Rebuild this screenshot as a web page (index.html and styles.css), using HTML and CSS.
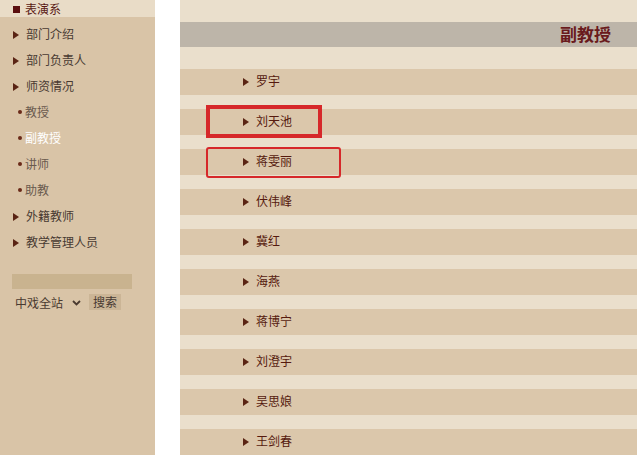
FILE: index.html
```html
<!DOCTYPE html>
<html>
<head>
  <meta charset="utf-8">
  <link rel="stylesheet" href="styles.css">
</head>
<body>
  <div class="sidebar">
    <div class="dept"><span class="square"></span>表演系</div>
    <ul class="menu">
      <li class="item"><span class="arrow"></span>部门介绍</li>
      <li class="item"><span class="arrow"></span>部门负责人</li>
      <li class="item"><span class="arrow"></span>师资情况</li>
      <li class="sub"><span class="dot"></span>教授</li>
      <li class="sub active"><span class="dot"></span>副教授</li>
      <li class="sub"><span class="dot"></span>讲师</li>
      <li class="sub"><span class="dot"></span>助教</li>
      <li class="item"><span class="arrow"></span>外籍教师</li>
      <li class="item"><span class="arrow"></span>教学管理人员</li>
    </ul>

    <div class="search">
      <div class="search-input"></div>
      <div class="search-row">
        <span class="scope">中戏全站</span>
        <svg class="chevron" width="9" height="6" viewBox="0 0 9 6"><path d="M1 1 L4.5 4.5 L8 1" fill="none" stroke="#4a3a30" stroke-width="1.8"/></svg>
        <span class="search-btn">搜索</span>
      </div>
    </div>
  </div>

  <div class="main">
    <div class="band-top"></div>
    <div class="title-bar">副教授</div>
    <div class="band-top"></div>

    <ul class="people">
      <li class="person"><span class="arrow"></span>罗宇</li>
      <li class="person"><span class="arrow"></span>刘天池</li>
      <li class="person"><span class="arrow"></span>蒋雯丽</li>
      <li class="person"><span class="arrow"></span>伏伟峰</li>
      <li class="person"><span class="arrow"></span>冀红</li>
      <li class="person"><span class="arrow"></span>海燕</li>
      <li class="person"><span class="arrow"></span>蒋博宁</li>
      <li class="person"><span class="arrow"></span>刘澄宇</li>
      <li class="person"><span class="arrow"></span>吴思娘</li>
      <li class="person"><span class="arrow"></span>王剑春</li>
    </ul>

    <!-- annotation boxes drawn over the list -->
    <div class="mark mark-thick"></div>
    <div class="mark mark-thin"></div>
  </div>
</body>
</html>
```

FILE: styles.css
```css
body {
  margin: 0;
  display: flex;
  height: 455px;
  overflow: hidden;
  background: #ffffff;
  font-family: "Noto Sans CJK SC", "Noto Sans", sans-serif;
  font-size: 12px;
}

ul {
  list-style: none;
  margin: 0;
  padding: 0;
}

.sidebar {
  width: 155px;
  background: #d9c4a7;
  color: #483a32;
}

.dept {
  height: 17px;
  line-height: 17px;
  background: #e9dcc7;
  color: #5a1a14;
  display: flex;
  align-items: center;
  padding-left: 13px;
}

.square {
  width: 7px;
  height: 7px;
  background: #5a0e0e;
  margin-right: 5px;
  margin-top: 2px;
}

.menu {
  padding-top: 5px;
}

.menu li {
  height: 26px;
  box-sizing: border-box;
  padding-bottom: 3px;
  display: flex;
  align-items: center;
}

.item {
  padding-left: 13px;
}

.item .arrow {
  margin-right: 7px;
  margin-top: 2px;
}

.arrow {
  width: 0;
  height: 0;
  border-top: 4px solid transparent;
  border-bottom: 4px solid transparent;
  border-left: 6px solid #5a2414;
}

.sub {
  padding-left: 18px;
  color: #6a5a4e;
}

.sub.active {
  color: #ffffff;
}

.dot {
  width: 4px;
  height: 4px;
  border-radius: 50%;
  background: #6a2a18;
  margin-right: 3px;
}

.search {
  padding: 18px 0 0 12px;
}

.search-input {
  width: 120px;
  height: 15px;
  background: #c9b38f;
}

.search-row {
  display: flex;
  align-items: center;
  margin-top: 5px;
  padding-left: 3px;
  height: 16px;
}

.scope {
  color: #4a3a30;
}

.chevron {
  margin: 1px 0 0 9px;
}

.search-btn {
  margin-left: 8px;
  padding: 0 4px;
  line-height: 16px;
  background: #cbb596;
}

.main {
  position: relative;
  flex: 1;
  margin-left: 25px;
  background: #eadfcc;
}

.band-top {
  height: 22px;
}

.title-bar {
  height: 25px;
  line-height: 24px;
  background: #bdb5a9;
  text-align: right;
  padding-right: 26px;
  font-size: 17px;
  font-weight: bold;
  color: #6a1a1c;
}

.person {
  height: 26px;
  box-sizing: border-box;
  padding-bottom: 3px;
  margin-bottom: 14px;
  background: #dbc7ab;
  display: flex;
  align-items: center;
  padding-left: 63px;
  color: #561a0e;
}

.person .arrow {
  margin-right: 7px;
  margin-top: 2px;
}

.mark {
  position: absolute;
  box-sizing: border-box;
  border-color: #d6282a;
  border-style: solid;
}

.mark-thick {
  left: 26px;
  top: 105px;
  width: 116px;
  height: 33px;
  border-width: 4px;
}

.mark-thin {
  left: 26px;
  top: 147px;
  width: 135px;
  height: 31px;
  border-width: 2px;
  border-radius: 3px;
}
```
